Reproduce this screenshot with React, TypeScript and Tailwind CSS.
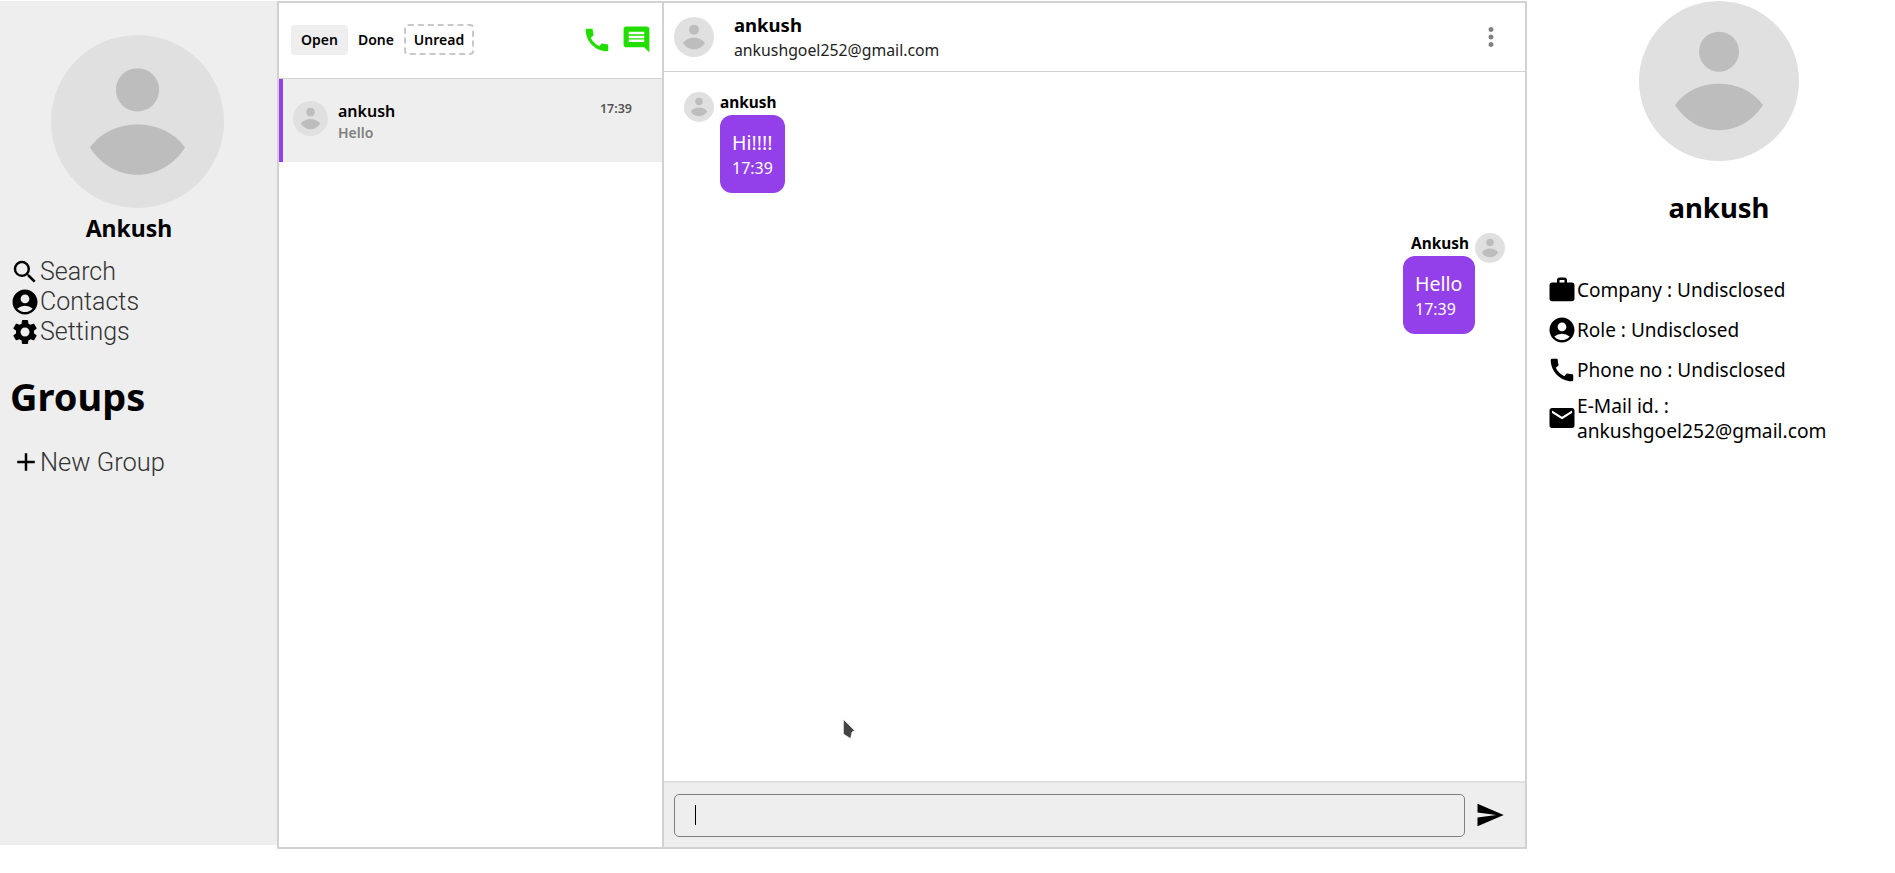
import React from "react";
import {
  MdAccountCircle,
  MdAdd,
  MdCall,
  MdEmail,
  MdMessage,
  MdMoreVert,
  MdSearch,
  MdSend,
  MdSettings,
  MdWork,
} from "react-icons/md";

function Avatar({ className }: { className: string }) {
  return (
    <svg viewBox="0 0 100 100" className={`shrink-0 ${className}`}>
      <circle cx="50" cy="50" r="50" fill="#e0e0e0" />
      <circle cx="50" cy="31.7" r="12.5" fill="#bdbdbd" />
      <path
        d="M22.5 65C29 56 39 51.7 50 51.7S71 56 77.5 65C71 75 61 80.8 50 80.8S29 75 22.5 65Z"
        fill="#bdbdbd"
      />
    </svg>
  );
}

const navItems = [
  { label: "Search", icon: MdSearch },
  { label: "Contacts", icon: MdAccountCircle },
  { label: "Settings", icon: MdSettings },
];

const details = [
  { label: "Company : Undisclosed", icon: MdWork },
  { label: "Role : Undisclosed", icon: MdAccountCircle },
  { label: "Phone no : Undisclosed", icon: MdCall },
];

function Sidebar() {
  return (
    <aside className="w-[277px] h-[844px] shrink-0 bg-[#eeeeee] pt-[34px] pl-[11px]">
      <Avatar className="w-[173px] h-[173px] ml-[40px]" />
      <div className="w-[236px] text-center text-[23px] leading-[30px] font-bold mt-[5px]">Ankush</div>
      <nav className="mt-[14px]">
        {navItems.map((n) => (
          <div key={n.label} className="flex items-center h-[30px]">
            <n.icon size={30} className="shrink-0 -ml-px" />
            <span className="font-['Roboto',sans-serif] text-[25px] leading-[30px] font-light text-[#333333]">
              {n.label}
            </span>
          </div>
        ))}
      </nav>
      <h2 className="text-[38px] leading-[48px] font-bold mt-[25px] -ml-px">Groups</h2>
      <div className="flex items-center h-[30px] mt-[27px]">
        <MdAdd size={30} className="shrink-0 -mr-px" />
        <span className="font-['Roboto',sans-serif] text-[25.5px] leading-[30px] font-light text-[#333333]">
          New Group
        </span>
      </div>
    </aside>
  );
}

function ConversationList() {
  return (
    <section className="w-[385px] shrink-0 border-r-2 border-[#d2d2d2]">
      <div className="h-[76px] flex items-center pl-[12px] pr-[10px] pb-[2px] border-b border-[#d2d2d2]">
        <button className="h-[30px] w-[57px] rounded bg-[#eeeeee] text-[14px] font-semibold">Open</button>
        <button className="w-[56px] h-[30px] text-[14px] font-semibold">Done</button>
        <button className="h-[31px] w-[70px] rounded border-2 border-dashed border-[#c8c8c8] text-[14px] font-semibold">
          Unread
        </button>
        <MdCall size={30} className="ml-auto text-[#22dd00]" />
        <MdMessage size={31} className="ml-[9px] -scale-x-100 text-[#22dd00]" />
      </div>
      <div className="h-[83px] flex bg-[#eeeeee] border-l-4 border-[#9340ea] pl-[10px] pr-[30px] pt-[22px]">
        <Avatar className="w-[35px] h-[35px]" />
        <div className="ml-[10px] flex-1">
          <div className="text-[16px] leading-[20px] font-semibold">ankush</div>
          <div className="text-[14px] leading-[20px] font-semibold text-[#808080] mt-[2px]">Hello</div>
        </div>
        <div className="text-[12.5px] leading-[16px] font-semibold text-[#555555]">17:39</div>
      </div>
    </section>
  );
}

function Bubble({ text, className }: { text: string; className: string }) {
  return (
    <div className={`mt-[2px] rounded-[12px] bg-[#9340ea] text-white px-[12px] pt-[15px] pb-[13px] ${className}`}>
      <div className="text-[19.5px] leading-[26px]">{text}</div>
      <div className="text-[16px] leading-[24px]">17:39</div>
    </div>
  );
}

function Chat() {
  return (
    <section className="relative flex-1 flex flex-col">
      <header className="h-[69px] flex items-center border-b border-[#d2d2d2] pl-[10px] pr-[19px]">
        <Avatar className="w-[40px] h-[40px]" />
        <div className="ml-[20px] flex-1">
          <div className="text-[18.5px] leading-[26px] font-bold">ankush</div>
          <div className="text-[15.8px] leading-[24px] text-[#222222]">ankushgoel252@gmail.com</div>
        </div>
        <MdMoreVert size={30} className="text-[#808080]" />
      </header>
      <div className="flex-1 flex flex-col pt-[20px] px-[20px]">
        <div className="flex items-start">
          <Avatar className="w-[30px] h-[30px]" />
          <div className="ml-[6px]">
            <div className="text-[15.4px] leading-[21px] font-bold">ankush</div>
            <Bubble text="Hi!!!!" className="w-[65px]" />
          </div>
        </div>
        <div className="flex items-start justify-end mt-[40px]">
          <div className="flex flex-col items-end">
            <div className="text-[15.4px] leading-[21px] font-bold pr-[6px]">Ankush</div>
            <Bubble text="Hello" className="w-[72px]" />
          </div>
          <Avatar className="w-[30px] h-[30px]" />
        </div>
      </div>
      <div className="h-[66px] flex items-center bg-[#eeeeee] border-t-2 border-[#e0e0e0] pl-[10px] pr-[20px]">
        <div className="flex-1 h-[43px] flex items-center rounded-[5px] border border-[#808080] pl-[20px]">
          <span className="w-px h-[20px] bg-black" />
        </div>
        <MdSend size={30} className="ml-[10px]" />
      </div>
      <svg viewBox="0 0 12 20" className="absolute left-[179px] top-[716px] w-[12px] h-[20px]">
        <path d="M0.5 0.5L11.5 11.5L9 13L7.5 19.5L0.5 15Z" fill="#444444" stroke="#ffffff" strokeWidth="0.5" />
      </svg>
    </section>
  );
}

function Profile() {
  return (
    <aside className="flex-1 text-[19px] text-black pl-[21px]">
      <Avatar className="w-[160px] h-[160px] ml-[91px]" />
      <div className="w-[342px] text-center text-[27.5px] leading-[36px] font-bold mt-[29px]">ankush</div>
      <div className="mt-[49px] flex flex-col gap-[10px]">
        {details.map((d) => (
          <div key={d.label} className="flex items-center min-h-[30px]">
            <d.icon size={30} className="shrink-0 -ml-px" />
            <span>{d.label}</span>
          </div>
        ))}
        <div className="flex items-center -mt-[2px]">
          <MdEmail size={30} className="shrink-0 -ml-px" />
          <span className="text-[19.2px] leading-[25px]">
            E-Mail id. :<br />
            ankushgoel252@gmail.com
          </span>
        </div>
      </div>
    </aside>
  );
}

export default function App() {
  return (
    <div className="h-[873px] flex items-start pt-px bg-white text-black font-['Noto_Sans',sans-serif] overflow-hidden">
      <Sidebar />
      <main className="w-[1250px] h-[848px] shrink-0 flex border-2 border-[#d2d2d2]">
        <ConversationList />
        <Chat />
      </main>
      <Profile />
    </div>
  );
}
